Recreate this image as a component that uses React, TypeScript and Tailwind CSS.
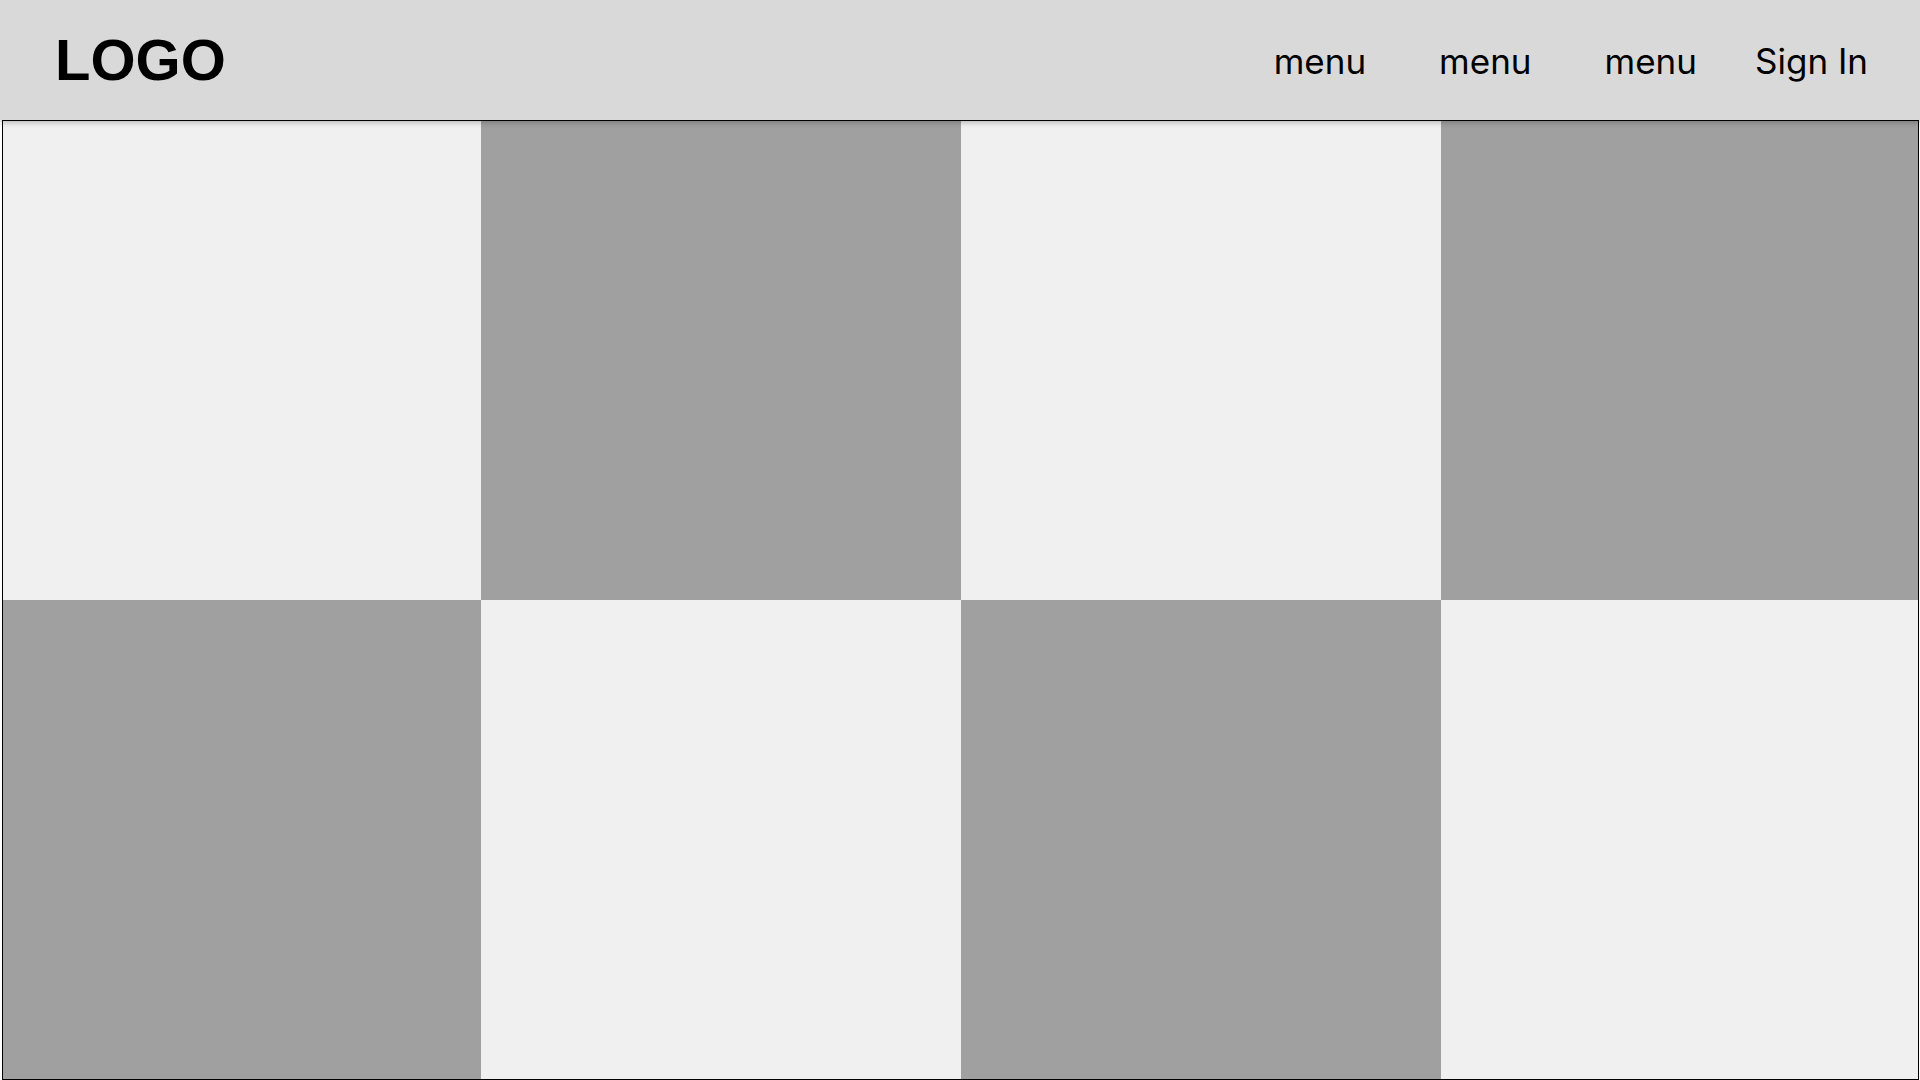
const cells = [
  "light", "dark", "light", "dark",
  "dark", "light", "dark", "light",
];

const menuItems = ["menu", "menu", "menu"];

export default function App() {
  return (
    <div className="h-[1080px] w-[1920px] overflow-hidden bg-white">
      <header className="relative z-10 flex h-[120px] items-center justify-between bg-[#d9d9d9] pl-[55px] pr-[52px] shadow-[0_3px_5px_rgba(0,0,0,0.22)]">
        <div className="font-['Liberation_Sans',Arial,sans-serif] text-[58px] font-bold leading-none text-black">LOGO</div>
        <nav className="mt-[2px] flex items-center font-['Inter',sans-serif] text-[35px] leading-none text-black">
          <div className="flex items-center gap-[73px]">
            {menuItems.map((label, i) => (
              <a key={i} href="#" className="block">
                {label}
              </a>
            ))}
          </div>
          <a href="#" className="ml-[58px] block">
            Sign In
          </a>
        </nav>
      </header>

      <main className="ml-[2px] h-[960px] w-[1917px] border border-black">
        <div className="grid h-full grid-cols-[478px_480px_480px_1fr] grid-rows-[479px_1fr]">
          {cells.map((tone, i) => (
            <div key={i} className={tone === "light" ? "bg-[#f0f0f0]" : "bg-[#a0a0a0]"} />
          ))}
        </div>
      </main>
    </div>
  );
}
